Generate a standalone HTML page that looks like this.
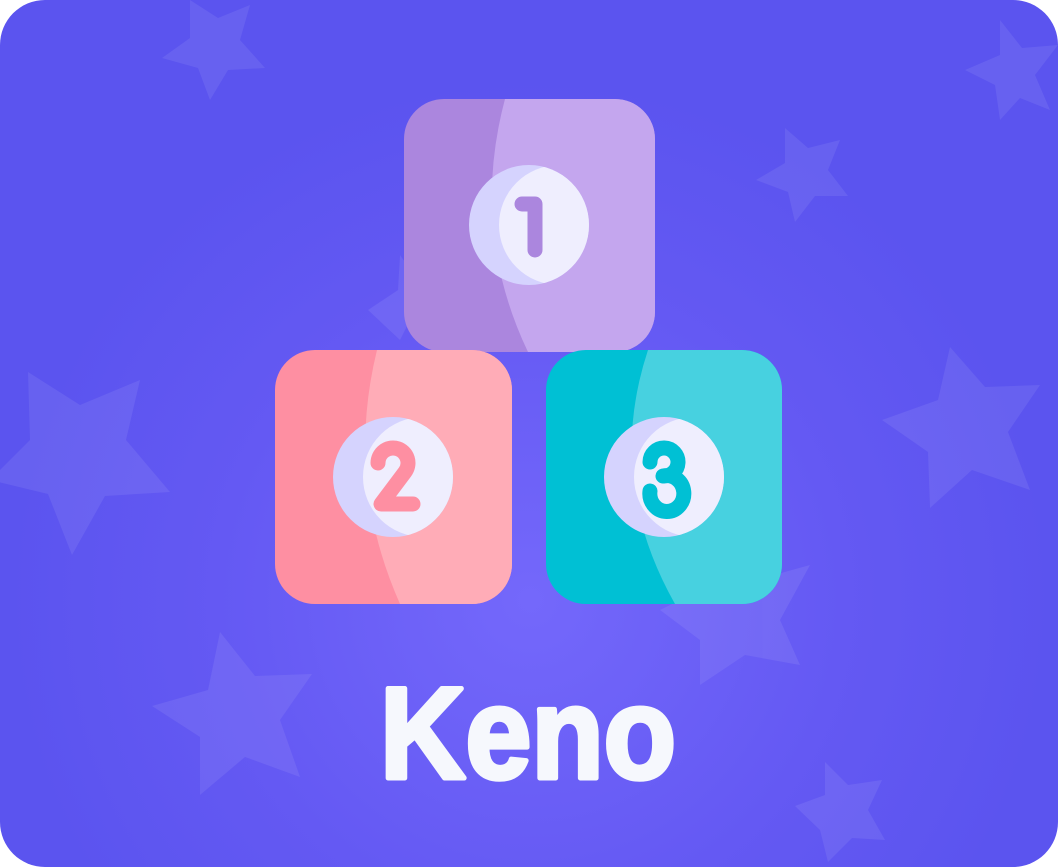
<!DOCTYPE html>
<html><head><style>html,body{margin:0;padding:0;background:#fff;}svg{display:block}</style></head>
<body>
<svg width="1058" height="867" viewBox="0 0 1058 867" xmlns="http://www.w3.org/2000/svg">
<defs>
<radialGradient id="bg" cx="530" cy="600" r="520" gradientUnits="userSpaceOnUse">
<stop offset="0" stop-color="#7468fb"/><stop offset="0.6" stop-color="#6459f3"/><stop offset="1" stop-color="#5b54ef"/>
</radialGradient>
<clipPath id="c1"><rect x="404" y="99" width="251" height="253" rx="40"/></clipPath>
<clipPath id="c2"><rect x="275" y="350" width="237" height="254" rx="40"/></clipPath>
<clipPath id="c3"><rect x="546" y="350" width="236" height="254" rx="40"/></clipPath>
<clipPath id="k1"><circle cx="529" cy="225" r="60"/></clipPath>
<clipPath id="k2"><circle cx="393" cy="477" r="60"/></clipPath>
<clipPath id="k3"><circle cx="664" cy="477" r="60"/></clipPath>
</defs>
<rect width="1058" height="867" rx="45" fill="url(#bg)"/>
<g fill="#ffffff" opacity="0.08">
<polygon points="190,0 218,18 250,5 240,40 265,68 228,70 210,100 198,68 162,58 190,38"/>
<polygon points="1000,20 1022,48 1058,45 1035,75 1050,110 1020,98 1000,120 995,85 965,70 1000,55"/>
<polygon points="785,128 808,148 840,140 828,170 848,196 815,196 795,222 788,192 756,180 785,163"/>
<polygon points="28,372 80,405 140,380 126,440 170,492 105,496 72,555 48,494 -10,480 30,440"/>
<polygon points="950,347 985,387 1040,385 1008,432 1030,490 972,470 930,508 928,452 882,420 938,400"/>
<polygon points="220,632 255,676 312,674 280,720 300,777 245,757 200,795 200,737 152,706 208,690"/>
<polygon points="825,762 848,785 882,780 868,810 885,840 852,838 828,862 820,830 795,806 825,795"/>
<polygon points="688,568 720,590 810,565 780,620 800,665 745,655 700,685 700,640 660,610 690,595"/>
<polygon points="400,255 425,290 400,340 368,310 398,290"/>
</g>
<g clip-path="url(#c1)">
<rect x="404" y="99" width="251" height="253" fill="#ab86de"/>
<path d="M505,99 Q470,230 528,352 L655,352 L655,99 Z" fill="#c4a6ee"/>
</g>
<g clip-path="url(#c2)">
<rect x="275" y="350" width="237" height="254" fill="#fe8fa2"/>
<path d="M377,350 Q345,480 400,604 L512,604 L512,350 Z" fill="#ffacb7"/>
</g>
<g clip-path="url(#c3)">
<rect x="546" y="350" width="236" height="254" fill="#00c0d4"/>
<path d="M648,350 Q605,480 675,604 L782,604 L782,350 Z" fill="#47d1e0"/>
</g>
<g clip-path="url(#k1)"><rect x="460" y="160" width="140" height="140" fill="#d5d3fe"/><circle cx="559" cy="225" r="60" fill="#efeefe"/></g>
<g clip-path="url(#k2)"><rect x="320" y="410" width="140" height="140" fill="#d5d3fe"/><circle cx="423" cy="477" r="60" fill="#efeefe"/></g>
<g clip-path="url(#k3)"><rect x="590" y="410" width="140" height="140" fill="#d5d3fe"/><circle cx="694" cy="477" r="60" fill="#efeefe"/></g>
<path d="M522,204 L535,204 L535,250" fill="none" stroke="#ab86de" stroke-width="15" stroke-linecap="round" stroke-linejoin="round"/>
<path d="M378,463 A15,15 0 1 1 405,472 L381,504 L413,504" fill="none" stroke="#fe8fa2" stroke-width="15" stroke-linecap="round" stroke-linejoin="round"/>
<path d="M650,462 A14,14 0 1 1 663,476 A17,18 0 1 1 650,491" fill="none" stroke="#00c0d4" stroke-width="15" stroke-linecap="round" stroke-linejoin="round"/>
<text x="380" y="778" font-family="Liberation Sans, sans-serif" font-weight="bold" font-size="130" fill="#f6f8fd" stroke="#f6f8fd" stroke-width="5" stroke-linejoin="round" textLength="296" lengthAdjust="spacingAndGlyphs">Keno</text>
</svg>
</body></html>
